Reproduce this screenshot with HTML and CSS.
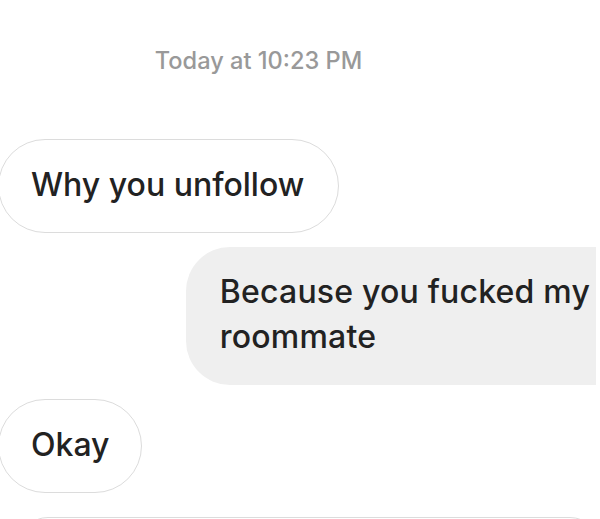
FILE: index.html
```html
<!DOCTYPE html>
<html>
<head>
<meta charset="utf-8">
<link rel="stylesheet" href="styles.css">
</head>
<body>
<div class="chat">
  <div class="stamp">Today at 10:23 PM</div>
  <div class="row left r1"><div class="bubble in">Why you unfollow</div></div>
  <div class="row right r2"><div class="bubble out">Because you fucked my<br>roommate</div></div>
  <div class="row left r3"><div class="bubble in short">Okay</div></div>
  <div class="composer"></div>
</div>
</body>
</html>
```
FILE: styles.css
```css
html, body {
  margin: 0;
  padding: 0;
  background: #ffffff;
  width: 600px;
  height: 519px;
  overflow: hidden;
}
.chat {
  display: flex;
  flex-direction: column;
  height: 519px;
  overflow: hidden;
  font-family: Inter, "Noto Sans", sans-serif;
  color: #222222;
}
.stamp {
  text-align: center;
  font-size: 23.6px;
  line-height: 28px;
  color: #999999;
  margin-top: 47px;
  padding-right: 83px;
  font-weight: 500;
}
.row {
  display: flex;
  flex-shrink: 0;
}
.row.right {
  justify-content: flex-end;
}
.r1 { margin-top: 64px; margin-left: -2px; }
.r2 { margin-top: 14px; margin-right: 4px; }
.r3 { margin-top: 14px; margin-left: -2px; }
.bubble {
  font-size: 32px;
  font-weight: 500;
  line-height: 45px;
  box-sizing: border-box;
  white-space: nowrap;
}
.bubble.in {
  border: 1.5px solid #dcdcdc;
  border-radius: 47px;
  height: 94px;
  padding: 22px 34px 0 32px;
}
.bubble.in.short {
  padding-right: 31px;
}
.bubble.out {
  background: #efefef;
  border-radius: 44px 0 0 44px;
  padding: 22px 6px 24px 34px;
  height: 138px;
  letter-spacing: 0.2px;
}
.composer {
  flex-shrink: 0;
  margin-top: 24px;
  margin-left: 18px;
  height: 60px;
  border: 1.5px solid #dcdcdc;
  border-radius: 30px;
}
```
